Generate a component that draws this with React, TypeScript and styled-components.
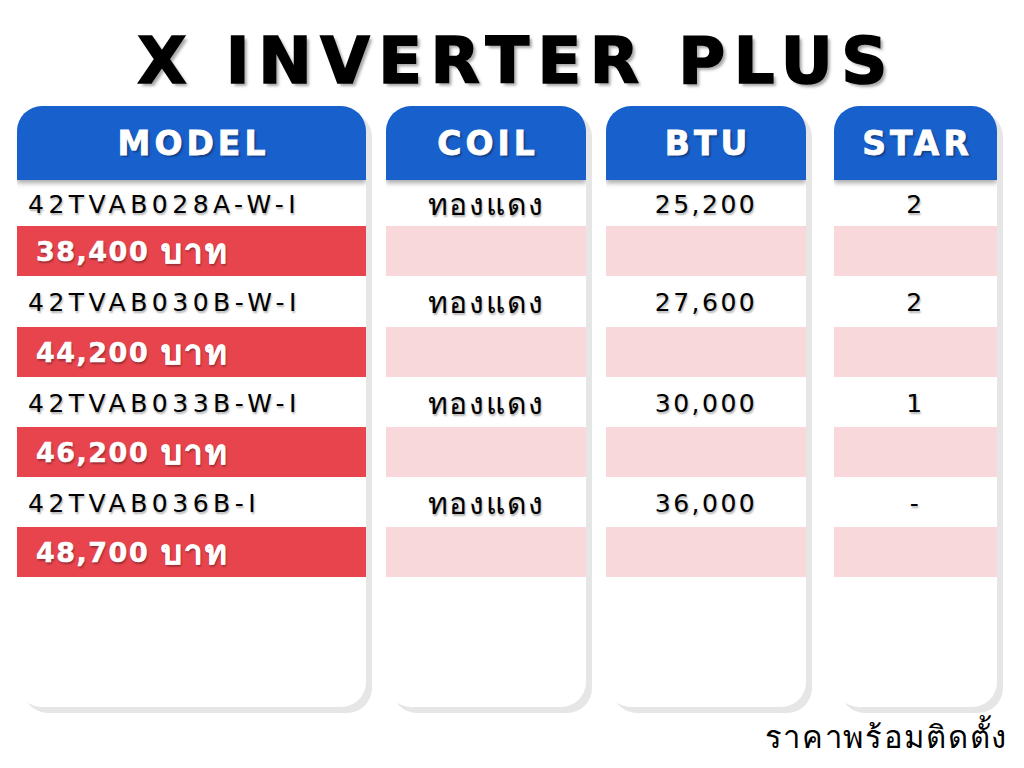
import React from "react";
import styled, { createGlobalStyle } from "styled-components";

const Global = createGlobalStyle`
  html, body { margin: 0; padding: 0; background: #ffffff; }
  body { width: 1024px; height: 768px; overflow: hidden; font-family: "DejaVu Sans", "Noto Sans", sans-serif; }
`;

const Page = styled.div`
  width: 1024px;
  height: 768px;
  display: flex;
  flex-direction: column;
  background: #ffffff;
`;

const Title = styled.h1`
  margin: 0;
  padding-top: 26px;
  padding-left: 9px;
  height: 106px;
  box-sizing: border-box;
  text-align: center;
  font-family: "DejaVu Sans", "Liberation Sans", sans-serif;
  font-weight: 700;
  font-size: 64px;
  line-height: 70px;
  letter-spacing: 8.5px;
  color: #000;
  -webkit-text-stroke: 1.6px #000;
  text-shadow: 3px 3px 3px rgba(0, 0, 0, 0.35);
`;

const Board = styled.div`
  display: flex;
  align-items: flex-start;
  padding-left: 17px;
`;

const Card = styled.div<{ $w: number; $gap: number }>`
  width: ${(p) => p.$w}px;
  margin-right: ${(p) => p.$gap}px;
  height: 601px;
  background: #fff;
  border-radius: 25px;
  box-shadow: 6px 6px 0 #e6e6e6;
  display: flex;
  flex-direction: column;
  overflow: hidden;
`;

const Header = styled.div`
  height: 74px;
  flex: none;
  background: #1860cc;
  color: #fff;
  display: flex;
  align-items: center;
  justify-content: center;
  padding-left: 4px;
  font-family: "DejaVu Sans", "Liberation Sans", sans-serif;
  font-weight: 700;
  font-size: 33px;
  letter-spacing: 4px;
  -webkit-text-stroke: 0.8px #fff;
  box-shadow: 0 3px 5px rgba(0, 0, 0, 0.35);
  position: relative;
  z-index: 1;
  text-shadow: 2px 2px 2px rgba(0, 0, 0, 0.35);
  box-sizing: border-box;
`;

const InfoRow = styled.div<{ $h: number; $align: "left" | "center"; $size: number; $spacing: number }>`
  height: ${(p) => p.$h}px;
  flex: none;
  display: flex;
  align-items: center;
  justify-content: ${(p) => (p.$align === "left" ? "flex-start" : "center")};
  padding-left: ${(p) => (p.$align === "left" ? "11px" : "0")};
  padding-top: 2px;
  box-sizing: border-box;
  font-size: ${(p) => p.$size}px;
  letter-spacing: ${(p) => p.$spacing}px;
  color: #000;
  text-shadow: 1px 2px 2px rgba(0, 0, 0, 0.3);
`;

const PriceRow = styled.div<{ $strong: boolean }>`
  height: 50px;
  flex: none;
  background: ${(p) => (p.$strong ? "#e7444e" : "#f8d8da")};
  display: flex;
  align-items: center;
  padding-left: 19px;
  box-sizing: border-box;
  color: #fff;
  font-weight: 700;
  font-size: 27px;
  letter-spacing: 1.5px;
  -webkit-text-stroke: 0.5px #fff;
  text-shadow: 1px 2px 2px rgba(0, 0, 0, 0.35);
`;

const PriceUnit = styled.span`
  font-size: 33px;
  margin-left: 12px;
  letter-spacing: 2px;
`;

const Footer = styled.div`
  display: flex;
  justify-content: flex-end;
  padding-right: 16px;
  margin-top: 10px;
  font-size: 31px;
  letter-spacing: 1.7px;
  line-height: 40px;
  color: #000;
`;

type Item = { model: string; coil: string; btu: string; star: string; price: string };

const items: Item[] = [
  { model: "42TVAB028A-W-I", coil: "ทองแดง", btu: "25,200", star: "2", price: "38,400" },
  { model: "42TVAB030B-W-I", coil: "ทองแดง", btu: "27,600", star: "2", price: "44,200" },
  { model: "42TVAB033B-W-I", coil: "ทองแดง", btu: "30,000", star: "1", price: "46,200" },
  { model: "42TVAB036B-I", coil: "ทองแดง", btu: "36,000", star: "-", price: "48,700" },
];

const rowHeights = [46, 51, 50, 50];

type Col = {
  key: keyof Item;
  label: string;
  w: number;
  gap: number;
  align: "left" | "center";
  size: number;
  spacing: number;
};

const cols: Col[] = [
  { key: "model", label: "MODEL", w: 349, gap: 20, align: "left", size: 25, spacing: 4.5 },
  { key: "coil", label: "COIL", w: 200, gap: 20, align: "center", size: 30, spacing: 1.8 },
  { key: "btu", label: "BTU", w: 200, gap: 28, align: "center", size: 25, spacing: 2.5 },
  { key: "star", label: "STAR", w: 163, gap: 0, align: "center", size: 25, spacing: 2.5 },
];

export default function App() {
  return (
    <Page>
      <Global />
      <Title>X INVERTER PLUS</Title>
      <Board>
        {cols.map((c) => (
          <Card key={c.key} $w={c.w} $gap={c.gap}>
            <Header>{c.label}</Header>
            {items.map((it, i) => (
              <React.Fragment key={i}>
                <InfoRow $h={rowHeights[i]} $align={c.align} $size={c.size} $spacing={c.spacing}>
                  {it[c.key]}
                </InfoRow>
                <PriceRow $strong={c.key === "model"}>
                  {c.key === "model" ? (
                    <>
                      {it.price}
                      <PriceUnit>บาท</PriceUnit>
                    </>
                  ) : null}
                </PriceRow>
              </React.Fragment>
            ))}
          </Card>
        ))}
      </Board>
      <Footer>ราคาพร้อมติดตั้ง</Footer>
    </Page>
  );
}
